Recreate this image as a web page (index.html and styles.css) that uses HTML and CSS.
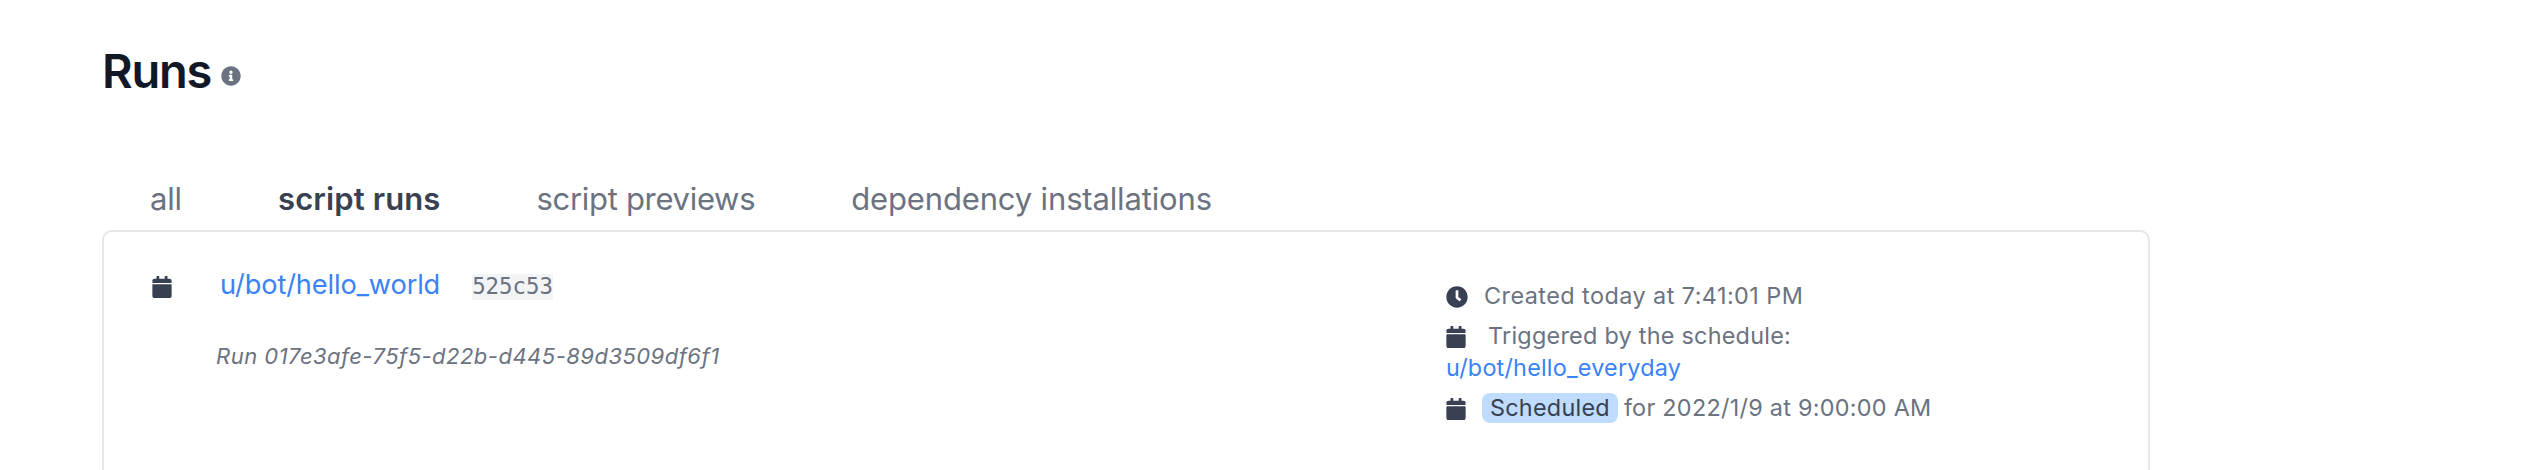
FILE: index.html
```html
<!DOCTYPE html>
<html lang="en">
<head>
<meta charset="utf-8">
<title>Runs</title>
<link rel="stylesheet" href="styles.css">
</head>
<body>
<svg class="defs" width="0" height="0">
  <symbol id="calendar" viewBox="0 0 448 512"><path d="M12 192h424c6.600 0 12 5.400 12 12v260c0 26.500-21.500 48-48 48H48c-26.500 0-48-21.500-48-48V204c0-6.600 5.400-12 12-12zm436-44v-36c0-26.500-21.500-48-48-48h-48V12c0-6.600-5.400-12-12-12h-40c-6.600 0-12 5.400-12 12v52H160V12c0-6.600-5.400-12-12-12h-40c-6.600 0-12 5.400-12 12v52H48C21.500 64 0 85.500 0 112v36c0 6.600 5.400 12 12 12h424c6.600 0 12-5.400 12-12z"/></symbol>
</svg>
<main class="page">
  <header class="heading">
    <h1 class="title">Runs</h1>
    <svg class="info" viewBox="0 0 512 512"><path d="M256 8C119 8 8 119.100 8 256c0 137 111 248 248 248s248-111 248-248C504 119.100 393 8 256 8zm0 110c23.200 0 42 18.800 42 42s-18.800 42-42 42-42-18.800-42-42 18.800-42 42-42zm56 254c0 6.600-5.400 12-12 12h-88c-6.600 0-12-5.400-12-12v-24c0-6.600 5.400-12 12-12h12v-64h-12c-6.600 0-12-5.400-12-12v-24c0-6.600 5.400-12 12-12h64c6.600 0 12 5.400 12 12v100h12c6.600 0 12 5.400 12 12v24z"/></svg>
  </header>
  <nav class="tabs">
    <a class="tab">all</a>
    <a class="tab tab-active">script runs</a>
    <a class="tab tab-previews">script previews</a>
    <a class="tab">dependency installations</a>
  </nav>
  <section class="card">
    <svg class="icon job-icon"><use href="#calendar"/></svg>
    <div class="job">
      <div class="job-head">
        <a class="path">u/bot/hello_world</a>
        <code class="hash">525c53</code>
      </div>
      <div class="run-id">Run 017e3afe-75f5-d22b-d445-89d3509df6f1</div>
    </div>
    <div class="meta">
      <div class="row"><svg class="clock" viewBox="0 0 512 512"><path d="M256 8C119 8 8 119 8 256s111 248 248 248 248-111 248-248S393 8 256 8zm92.500 313l-20 25a16 16 0 0 1-22.500 2.500l-67-49.700a40 40 0 0 1-15-31.200V112a16 16 0 0 1 16-16h32a16 16 0 0 1 16 16v144l58 42.500a16 16 0 0 1 2.500 22.500z"/></svg><span class="created">Created today at 7:41:01 PM</span></div>
      <div class="row"><svg class="icon"><use href="#calendar"/></svg><span class="trigger">Triggered by the schedule:</span></div>
      <a class="schedule">u/bot/hello_everyday</a>
      <div class="row"><svg class="icon"><use href="#calendar"/></svg><span class="badge">Scheduled</span><span class="when">for 2022/1/9 at 9:00:00 AM</span></div>
    </div>
  </section>
</main>
</body>
</html>
```
FILE: styles.css
```css
* { box-sizing: border-box; }
body {
  margin: 0;
  background: #fff;
  color: #6b7280;
  font-family: Inter, sans-serif;
}
.defs { display: block; }
.page { width: 2048px; margin-left: 102px; padding-top: 39px; }
.heading { display: flex; height: 64px; }
.title {
  margin: 0;
  color: #111827;
  font-size: 47px;
  font-weight: 600;
  line-height: 64px;
  letter-spacing: -1.200px;
}
.info { width: 20px; height: 20px; margin: 27px 0 0 10px; fill: #6b7280; }
.tabs { display: flex; height: 127px; padding: 72px 48px 0; gap: 96px; }
.tab {
  font-size: 31px;
  line-height: 48px;
  letter-spacing: -0.150px;
  white-space: nowrap;
}
.tab-active { color: #374151; font-weight: 600; letter-spacing: 0.120px; }
.tab-previews { letter-spacing: -0.310px; }
.card {
  display: flex;
  height: 240px;
  border: 2px solid #e5e7eb;
  border-bottom: 0;
  border-radius: 10px 10px 0 0;
  padding: 32px 48px 0;
}
.icon { flex: none; display: block; width: 20px; height: 22px; fill: #374151; }
.job-icon { margin-top: 12px; }
.job { flex: none; width: 1274px; padding-left: 44px; }
.job-head { display: flex; padding-left: 4px; height: 40px; }
.path {
  color: #3b82f6;
  font-size: 27.200px;
  line-height: 41px;
  letter-spacing: -0.130px;
}
.hash {
  height: 26px;
  margin: 10px 0 0 32px;
  background: #f3f4f6;
  font-family: "DejaVu Sans Mono", monospace;
  font-size: 22.400px;
  line-height: 25px;
}
.run-id {
  margin-top: 36px;
  font-size: 22px;
  font-style: italic;
  line-height: 33px;
  letter-spacing: 0.480px;
}
.meta {
  padding-top: 16px;
  font-size: 23.400px;
  line-height: 32px;
  letter-spacing: 0.250px;
  white-space: nowrap;
}
.row { display: flex; align-items: center; height: 32px; margin-bottom: 8px; }
.row:nth-child(2) { margin-bottom: 0; }
.row .icon, .clock { margin-top: 2px; }
.schedule {
  display: block;
  color: #3b82f6;
  margin-bottom: 8px;
  letter-spacing: 0.200px;
}
.clock { width: 22px; height: 22px; fill: #374151; }
.created { margin-left: 16px; letter-spacing: 0.450px; }
.trigger { margin-left: 22px; }
.badge {
  margin-left: 16px;
  padding: 0 8px;
  border-radius: 8px;
  background: #bfdbfe;
  color: #374151;
  line-height: 30px;
}
.when { margin-left: 6px; letter-spacing: 0.270px; }
```
